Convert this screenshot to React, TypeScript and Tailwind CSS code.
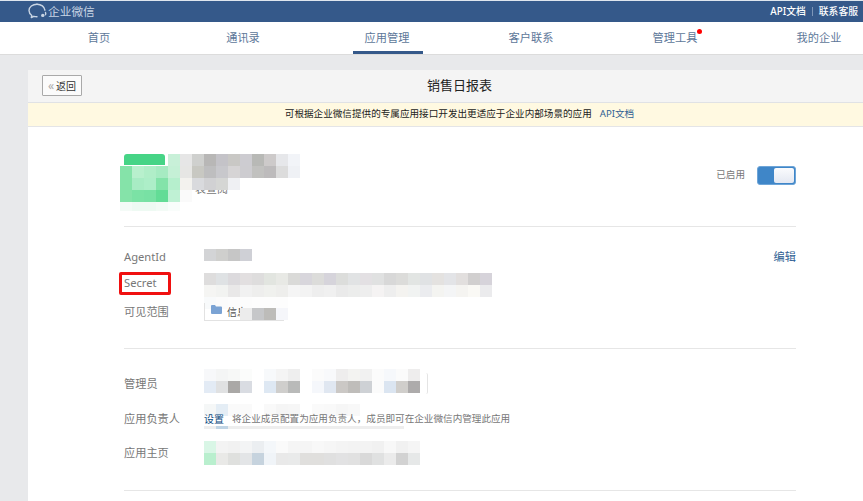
const navItems = ['首页', '通讯录', '应用管理', '客户联系', '管理工具', '我的企业'];

// pixelated areas of the screenshot; each row is 12px tall, each cell 12px wide
const nameMosaic = [
  ['', '', '', '', '#c8f0d8', '#e6e6e6', '#cfd0ce', '#b8b7b6', '#c4c3c8', '#c9c8c5', '#cdccd1', '#b8b9b6', '#cdcaca', '#e6e7ea', '#f2f4f8'],
  ['#85e3a9', '#b8f0cd', '#b0eec8', '#a6ebc2', '#c5f0d6', '#e6e6e4', '#c8c8c2', '#bebebf', '#c8c8cc', '#d6d4d5', '#cdccd0', '#c1c1bf', '#bdbbbc', '#dcdcdc', '#eff1f5'],
  ['#85e3a9', '#a8ecc4', '#adeec8', '#83e3a9', '#b6efcd', '#f3f2ee', '#d9dadd', '#d1d1d3', '#d5d6d4', '#eff0f3'],
  ['#85e3a9', '#7be2a5', '#78e1a4', '#63dc96', '#bff1d4', '#fafafa'],
  ['#f4fbf7', '#eefaf3', '#eefaf3', '#f3fbf6', '#f9fdfb'],
];
const agentMosaic = [['#d3d4d6', '#cfcfcd', '#c6c6c6', '#cfd0d6']];
const secretMosaic = [
  ['#dedddd', '#dfe2e4', '#dcdadd', '#e2dfe0', '#dedddd', '#e2e5e0', '#e8e9e5', '#dadad8', '#d8d6dc', '#dcdcda', '#d6d4db', '#dcdddb', '#e1e3e4', '#e3e0e3', '#e0e1e1', '#d8d8d8', '#dcdcda', '#e2e5e3', '#e0e2e4', '#e4e2e0', '#e3e4e7', '#e2dfde', '#d1cfcf', '#d6d3da'],
  ['#f5f5f3', '#f2f3f1', '#e9e8e8', '#f1f1f1', '#eeeeed', '#f0f1ee', '#eeeeec', '#f5f5f5', '#f3f3f3', '#eeeeee', '#f0f0f0', '#eaeaea', '#ecedec', '#eeeeee', '#f5f3f3', '#eeeeee', '#f4f3f0', '#f1f3f2', '#ebecef', '#f4f4f1', '#f4f5f6', '#f5f4f1', '#faf9f5', '#ebebed'],
  ['#f8fafb', '#fbfbfb', '#fcfcfc', '#fcfcfc', '#fdfdfd', '#fdfdfd', '#fdfdfd'],
];
const scopeMosaic = [['#ececec', '#c6c7c9', '#bdbcb9', '#f5f6fa']];
const adminMosaic = [
  ['#f7f8fa', '#f4f5f5', '#f7f8f7', '#fbfcfb', '', '#f7f9fb', '#f4f4f4', '#eeeeee', '', '#fbfbfb', '#f8f9fb', '#eeeded', '#f3f3f1', '#f1f1f1', '#fbfbfb', '#f6f8fb', '#fbfbfb', '#eeeded'],
  ['#e3ebf5', '#e0e1e2', '#aaa8a6', '#d9dce2', '', '#dee8f3', '#cfcecc', '#b9bab9', '', '#f5f7fb', '#e0e7f1', '#cbc8c5', '#bfbdba', '#ced1d5', '#fbfbfb', '#dbe5f1', '#d0cecb', '#adabab'],
];
const ownerMosaic = [['#f5f7f7', '#e4edf5', '#fafafa', '#fafafa', '', '#f9f9f9', '#f5f5f5', '#f6f6f6', '', '#fafafa', '#f9f9f9', '#f6f6f6', '#f8f8f8']];
const homeMosaic = [
  ['#d9f6e6', '#f3f3f3', '#f1f1f1', '#f3f4f5', '#ebeef1', '#f4f7fa', '#fafafa', '#f5f5f5', '#f5f5f5', '#f8f8f8', '#f6f6f6', '#f4f4f4', '#f3f3f3', '#f3f3f3', '#f1f1f1', '#f8f8f8', '#f1f1f1', '#f5f5f5'],
  ['#b9efce', '#e9e9e7', '#dfe0de', '#e3e5e7', '#c6d3de', '#f0f4f8', '#e9e9e9', '#e9eaea', '#e0dfdd', '#e0dfdd', '#e0e0e0', '#e2e2e3', '#e1e1e1', '#d9d9d9', '#e0e1e1', '#ebebeb', '#d2d2d2', '#e6e8e8'],
];

function Mosaic({ rows, className }: { rows: string[][]; className: string }) {
  return (
    <div className={`absolute overflow-hidden ${className}`}>
      {rows.map((row, i) => (
        <div key={i} className="flex">
          {row.map((color, j) => (
            <div key={j} className="h-3 w-3 shrink-0" style={{ backgroundColor: color || 'transparent' }} />
          ))}
        </div>
      ))}
    </div>
  );
}

function Logo() {
  return (
    <svg width="19" height="17" viewBox="0 0 19 17" fill="none" stroke="#c9d5e4" strokeWidth="1.4">
      <path d="M9 1.2C4.6 1.2 1 4 1 7.6c0 2 1.1 3.7 2.8 4.9l-.5 2 2.5-1.2c1 .3 2 .4 3.2.4" strokeLinecap="round" strokeLinejoin="round" />
      <path d="M9 1.2c4.2 0 7.5 2.6 7.9 6" strokeLinecap="round" />
      <circle cx="14.8" cy="12.4" r="1.7" fill="#c9d5e4" stroke="none" />
      <path d="M17.5 9.5c.4.8.3 1.5 0 2.2" strokeLinecap="round" />
    </svg>
  );
}

function Row({ label, height, children }: { label: string; height: string; children?: React.ReactNode }) {
  return (
    <div className={`flex items-center ${height}`}>
      <div className="w-20 shrink-0 text-[11.2px] text-[#777]">{label}</div>
      <div className="relative flex h-full flex-1 items-center">{children}</div>
    </div>
  );
}

export default function App() {
  return (
    <div className="h-[501px] w-[863px] overflow-hidden bg-[#e8e9eb] font-['Noto_Sans','Noto_Sans_CJK_SC',sans-serif]">
      <header className="flex h-[22px] items-center justify-between border-t border-[#dfe6ee] bg-[#35598a] pr-[5px] pl-[28px]">
        <div className="flex items-center gap-px">
          <Logo />
          <span className="text-[11.7px] leading-none text-[#c9d5e4]">企业微信</span>
        </div>
        <div className="flex items-center text-[9.8px] leading-none font-medium text-white">
          <span>API文档</span>
          <span className="mx-[6px] h-[9px] w-px bg-[#7d96b8]" />
          <span>联系客服</span>
        </div>
      </header>

      <nav className="h-[33px] w-[863px] overflow-visible border-b border-[#dcdcdc] bg-white">
        <div className="ml-[27px] grid w-[864px] grid-cols-6">
          {navItems.map((item, i) => (
            <div key={item} className="relative flex h-[32px] items-center justify-center text-[11.2px] text-[#5d7799]">
              <span className="relative">
                {item}
                {i === 4 && <span className="absolute -top-[1px] -right-[5px] h-[5px] w-[5px] rounded-full bg-[#f00]" />}
              </span>
              {i === 2 && <span className="absolute bottom-0 left-[38px] h-[3px] w-[70px] bg-[#35598a]" />}
            </div>
          ))}
        </div>
      </nav>

      <main className="mt-[15px] ml-[28px] h-[440px] w-[863px] rounded-tl-[3px] bg-white">
        <div className="relative flex h-[33px] items-center justify-center border-b border-[#e0e2e5] bg-[#f4f4f4]">
          <button className="absolute top-[5px] left-[14px] flex h-[21px] w-[40px] items-center justify-center gap-[2px] rounded-[1px] border border-[#a9a9a9] bg-[#fbfbfb] text-[10px] leading-none text-[#333]">
            <span className="text-[12px] text-[#aaa]">«</span>
            <span>返回</span>
          </button>
          <h1 className="text-[13px] font-normal text-[#222]">销售日报表</h1>
        </div>

        <div className="flex h-[24px] items-center justify-center gap-[8px] border-b border-[#e4e5e7] bg-[#fff9e1] text-[9.6px] text-[#222]">
          <span>可根据企业微信提供的专属应用接口开发出更适应于企业内部场景的应用</span>
          <span className="text-[#2f5f93]">API文档</span>
        </div>

        <div className="pr-[95px] pl-[96px]">
          <section className="relative h-[100px] border-b border-[#e6e6e6]">
            <div className="absolute top-[27px] left-0 h-[11px] w-[41px] rounded-t-[3px] bg-[#46d486]" />
            <div className="absolute top-[55px] left-[71px] text-[11px] leading-[14px] text-[#777]">表查阅</div>
            <Mosaic rows={nameMosaic} className="top-[27px] -left-[4px] h-[57px]" />
            <div className="absolute top-[39px] right-0 flex items-center gap-[12px]">
              <span className="text-[9.6px] text-[#777]">已启用</span>
              <div className="flex h-[19px] w-[39px] justify-end rounded-[3px] border border-[#6ea5d8] bg-[#3f86c8] p-px">
                <div className="h-full w-[20px] rounded-[2px] bg-gradient-to-b from-[#fafbfd] to-[#e4e8f2]" />
              </div>
            </div>
          </section>

          <section className="relative border-b border-[#e6e6e6] pt-[17px] pb-[20px]">
            <Row label="AgentId" height="h-[26px]">
              <Mosaic rows={agentMosaic} className="top-[5px] left-0" />
              <span className="absolute right-0 text-[11.2px] text-[#2f5f93]">编辑</span>
            </Row>
            <Row label="Secret" height="h-[26px]">
              <Mosaic rows={secretMosaic} className="top-[3px] left-0" />
            </Row>
            <Row label="可见范围" height="h-[32px]">
              <div className="flex h-[18px] w-[80px] items-center gap-[5px] border-b border-l border-[#e2e2e2] pl-[6px]">
                <svg width="11" height="9" viewBox="0 0 11 9" fill="#7ba3d4" className="mb-[4px]">
                  <path d="M0 1a1 1 0 0 1 1-1h3l1 1.5h5a1 1 0 0 1 1 1V8a1 1 0 0 1-1 1H1a1 1 0 0 1-1-1z" />
                </svg>
                <span className="text-[10px] leading-none text-[#555]">信息</span>
              </div>
              <Mosaic rows={scopeMosaic} className="top-[12px] left-[36px]" />
            </Row>
            <div className="absolute top-[45px] -left-[5px] h-[23px] w-[52px] rounded-[2px] border-[3px] border-[#f01010]" />
          </section>

          <section className="border-b border-[#e6e6e6] pt-[18px] pb-[21px]">
            <Row label="管理员" height="h-[34px]">
              <div className="absolute top-[6px] left-0 h-[21px] w-[224px] rounded-[2px] border-r border-[#e4e4e4]" />
              <Mosaic rows={adminMosaic} className="top-[2px] left-0" />
            </Row>
            <Row label="应用负责人" height="h-[36px]">
              <Mosaic rows={ownerMosaic} className="top-[3px] left-0" />
              <span className="relative text-[10px] text-[#0b4a80]">设置</span>
              <span className="relative ml-[8px] text-[9.6px] text-[#777]">将企业成员配置为应用负责人，成员即可在企业微信内管理此应用</span>
              <div className="absolute top-[25px] left-0 h-[3px] w-[200px] bg-[#eeeeee]" />
              <div className="absolute top-[25px] left-[12px] h-[3px] w-3 bg-[#c0d4e4]" />
            </Row>
            <Row label="应用主页" height="h-[32px]">
              <Mosaic rows={homeMosaic} className="top-[4px] left-0" />
            </Row>
          </section>
        </div>
      </main>
    </div>
  );
}
